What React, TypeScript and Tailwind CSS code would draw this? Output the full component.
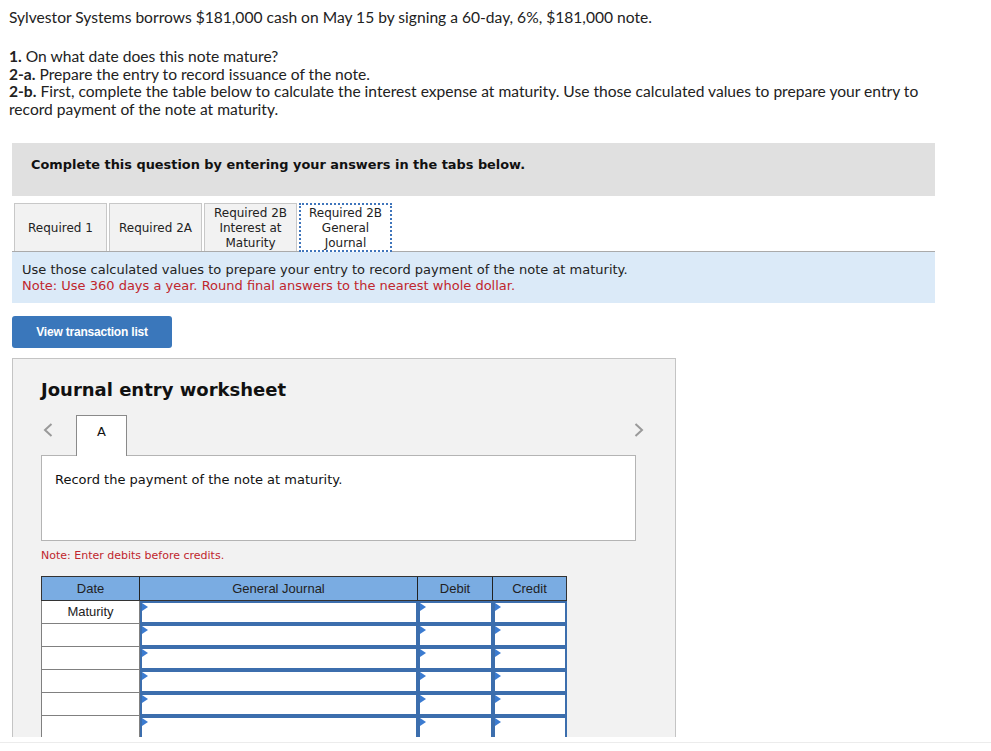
const verdana = "font-['DejaVu_Sans','Verdana',sans-serif]";
const arial = "font-['Liberation_Sans','Arial',sans-serif]";

const tabs = [
  { label: ["Required 1"], active: false },
  { label: ["Required 2A"], active: false },
  { label: ["Required 2B", "Interest at", "Maturity"], active: false },
  { label: ["Required 2B", "General", "Journal"], active: true },
];

function Chevron({ dir }: { dir: "left" | "right" }) {
  return (
    <svg width="10" height="14" viewBox="0 0 10 14" className="mt-[8px]">
      <polyline
        points={dir === "left" ? "8.5,1 2,7 8.5,13" : "1.5,1 8,7 1.5,13"}
        fill="none"
        stroke="#9a9a9a"
        strokeWidth="2"
      />
    </svg>
  );
}

function InputCell({ width }: { width: string }) {
  return (
    <div className={`relative h-[23px] ${width} border-2 border-[#3c6ead] bg-white`}>
      <span className="absolute left-0 top-0 h-0 w-0 border-y-[4px] border-l-[6px] border-y-transparent border-l-[#3b7bd0]" />
    </div>
  );
}

function JournalRow({ date }: { date?: string }) {
  return (
    <div className="flex">
      <div
        className={`flex h-[23px] w-[99px] items-center justify-center border border-t-0 border-[#808080] bg-white text-[13px] text-[#222] ${arial}`}
      >
        {date}
      </div>
      <InputCell width="w-[278px]" />
      <InputCell width="w-[75px]" />
      <InputCell width="w-[74px]" />
    </div>
  );
}

export default function App() {
  return (
    <div className="w-[991px] bg-white">
      <div className="h-[737px] overflow-hidden">
        <div className="pl-[9px] pr-[30px] pt-[8px] font-['Lato',sans-serif] text-[15.6px] text-[#222]">
          <p className="leading-[18px]">
            Sylvestor Systems borrows $181,000 cash on May 15 by signing a 60-day, 6%, $181,000 note.
          </p>
          <div className="mt-[22px] leading-[17.5px]">
            <p>
              <b>1.</b> On what date does this note mature?
            </p>
            <p>
              <b>2-a.</b> Prepare the entry to record issuance of the note.
            </p>
            <p>
              <b>2-b.</b> First, complete the table below to calculate the interest expense at maturity. Use those
              calculated values to prepare your entry to record payment of the note at maturity.
            </p>
          </div>
        </div>

        <div className="mx-[12px] mt-[25px] w-[923px]">
          <div className={`h-[53px] bg-[#e0e0e0] pl-[19px] pt-[14px] text-[12.9px] font-bold leading-[16px] text-[#111] ${verdana}`}>
            Complete this question by entering your answers in the tabs below.
          </div>

          <div className="mt-[7px] flex gap-[2px] border-b border-[#aaa] pl-[2px]">
            {tabs.map((t, i) => (
              <div
                key={i}
                className={`flex w-[93px] flex-col items-center justify-center text-center text-[12px] leading-[15px] text-[#222] ${verdana} ${
                  t.active
                    ? "-mb-px h-[49px] border-2 border-dotted border-[#3f75bb] bg-white pt-[1px]"
                    : "h-[48px] border border-b-0 border-[#c8c8c8] bg-[#f2f2f2] pt-[2px]"
                }`}
              >
                {t.label.map((l) => (
                  <span key={l}>{l}</span>
                ))}
              </div>
            ))}
          </div>

          <div className={`h-[51px] bg-[#dbeaf8] px-[10px] pt-[10px] text-[13px] leading-[16px] ${verdana}`}>
            <p className="text-[#222]">
              Use those calculated values to prepare your entry to record payment of the note at maturity.
            </p>
            <p className="text-[#c0262d]">Note: Use 360 days a year. Round final answers to the nearest whole dollar.</p>
          </div>

          <button
            className={`mt-[13px] block h-[32px] w-[160px] rounded-[3px] bg-[#3a77bb] text-[12px] font-bold tracking-[-0.2px] text-white ${arial}`}
          >
            View transaction list
          </button>

          <div className="mt-[10px] h-[400px] w-[664px] border border-[#c4c4c4] bg-[#f2f2f2] pl-[28px]">
            <h2 className={`pt-[19px] text-[18px] font-bold leading-[24px] text-[#111] ${verdana}`}>
              Journal entry worksheet
            </h2>

            <div className="mt-[13px] flex w-[603px] items-start">
              <span className="ml-[2px]">
                <Chevron dir="left" />
              </span>
              <div
                className={`relative z-10 -mb-px ml-[23px] flex h-[41px] w-[51px] items-center justify-center border border-b-0 border-[#8a8a8a] bg-white pb-[9px] text-[13px] text-[#111] ${verdana}`}
              >
                A
              </div>
              <div className="flex-1" />
              <Chevron dir="right" />
            </div>

            <div
              className={`h-[86px] w-[595px] border border-[#b4b4b4] bg-white pl-[13px] pt-[14px] text-[13px] text-[#111] ${verdana}`}
            >
              Record the payment of the note at maturity.
            </div>

            <p className={`mt-[8px] text-[11px] leading-[14px] text-[#c0262d] ${verdana}`}>
              Note: Enter debits before credits.
            </p>

            <div className="mt-[13px] w-[526px]">
              <div className={`flex h-[25px] border border-[#333] bg-[#7aace2] text-[13px] text-[#222] ${arial}`}>
                <div className="flex w-[98px] items-center justify-center border-r border-[#222]">Date</div>
                <div className="flex w-[278px] items-center justify-center border-r border-[#222]">
                  General Journal
                </div>
                <div className="flex w-[75px] items-center justify-center border-r border-[#222]">Debit</div>
                <div className="flex flex-1 items-center justify-center">Credit</div>
              </div>
              <JournalRow date="Maturity" />
              <JournalRow />
              <JournalRow />
              <JournalRow />
              <JournalRow />
              <JournalRow />
            </div>
          </div>
        </div>
      </div>
      <div className="mt-[5px] border-t border-[#ececec]" />
    </div>
  );
}
